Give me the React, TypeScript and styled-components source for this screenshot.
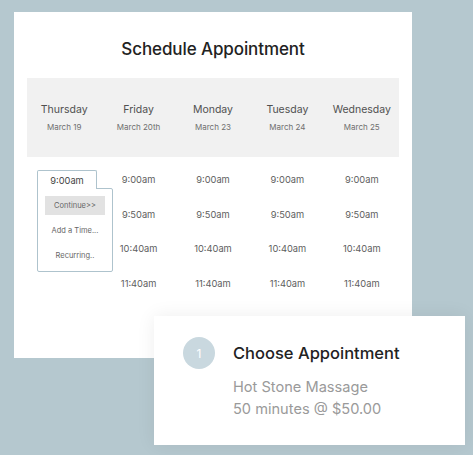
import styled, { createGlobalStyle } from "styled-components";

const GlobalStyle = createGlobalStyle`
  html, body {
    margin: 0;
    padding: 0;
    background: #b5c8cf;
    font-family: Inter, "Liberation Sans", sans-serif;
  }
`;

const days = [
  { name: "Thursday", date: "March 19" },
  { name: "Friday", date: "March 20th" },
  { name: "Monday", date: "March 23" },
  { name: "Tuesday", date: "March 24" },
  { name: "Wednesday", date: "March 25" },
];

const times = ["9:00am", "9:50am", "10:40am", "11:40am"];

const Page = styled.div`
  position: relative;
  width: 473px;
  height: 455px;
  padding: 12px 0 0 14px;
  box-sizing: border-box;
  overflow: hidden;
`;

const Card = styled.div`
  width: 398px;
  height: 346px;
  background: #fff;
  padding: 0 13px;
  box-sizing: border-box;
`;

const Title = styled.h1`
  margin: 0;
  padding-top: 27px;
  height: 66px;
  box-sizing: border-box;
  text-align: center;
  font-size: 17px;
  line-height: 20px;
  font-weight: 500;
  color: #222;
  letter-spacing: -0.1px;
`;

const Columns = styled.div`
  display: grid;
  grid-template-columns: repeat(5, minmax(0, 1fr));
`;

const Band = styled(Columns)`
  height: 79px;
  background: #f1f1f1;
  padding-top: 25px;
  box-sizing: border-box;
`;

const Day = styled.div`
  display: flex;
  flex-direction: column;
  align-items: center;
  gap: 4px;
`;

const DayName = styled.span`
  font-size: 10.5px;
  line-height: 14px;
  color: #505050;
`;

const DayDate = styled.span`
  font-size: 8px;
  line-height: 12px;
  color: #6f6f6f;
`;

const Slots = styled.div`
  display: flex;
  flex-direction: column;
  align-items: center;
  padding-top: 5px;
`;

const Slot = styled.div`
  height: 34.7px;
  display: flex;
  align-items: center;
  font-size: 9.3px;
  color: #5e5e5e;
`;

const PickedColumn = styled.div`
  padding: 13px 0 0 10px;
`;

const Popup = styled.div`
  width: 76px;
  display: flex;
  flex-direction: column;
`;

const Tab = styled.div`
  position: relative;
  z-index: 1;
  width: 60px;
  height: 19px;
  margin-bottom: -1px;
  background: #fff;
  border: 1px solid #aec3cd;
  border-bottom: none;
  border-radius: 2px 2px 0 0;
  box-sizing: border-box;
  display: flex;
  align-items: center;
  justify-content: center;
  font-size: 9.3px;
  color: #444;
`;

const Menu = styled.div`
  height: 84px;
  border: 1px solid #aec3cd;
  border-radius: 0 2px 2px 2px;
  box-sizing: border-box;
  display: flex;
  flex-direction: column;
  align-items: center;
  padding-top: 7px;
`;

const MenuItem = styled.div<{ $active?: boolean }>`
  width: 60px;
  height: ${(p) => (p.$active ? "19px" : "25px")};
  margin-bottom: ${(p) => (p.$active ? "3px" : "0")};
  background: ${(p) => (p.$active ? "#e2e2e2" : "transparent")};
  display: flex;
  align-items: center;
  justify-content: center;
  font-size: 7.5px;
  color: #666;
`;

const StepCard = styled.div`
  position: absolute;
  left: 154px;
  top: 316px;
  width: 311px;
  height: 129px;
  background: #fff;
  box-shadow: 0 0 18px rgba(0, 0, 0, 0.07);
  display: grid;
  grid-template-columns: 32px 1fr;
  column-gap: 18px;
  padding: 21px 0 0 29px;
  box-sizing: border-box;
`;

const StepBadge = styled.div`
  width: 32px;
  height: 32px;
  border-radius: 50%;
  background: #c9d8df;
  color: #fff;
  font-size: 12px;
  display: flex;
  align-items: center;
  justify-content: center;
`;

const StepText = styled.div`
  display: flex;
  flex-direction: column;
`;

const StepTitle = styled.div`
  height: 32px;
  margin-bottom: 7px;
  display: flex;
  align-items: center;
  font-size: 16.5px;
  font-weight: 500;
  color: #222;
`;

const StepDetail = styled.div`
  font-size: 14.6px;
  line-height: 22px;
  color: #9a9a9a;
`;

export default function App() {
  return (
    <Page>
      <GlobalStyle />
      <Card>
        <Title>Schedule Appointment</Title>
        <Band>
          {days.map((d) => (
            <Day key={d.name}>
              <DayName>{d.name}</DayName>
              <DayDate>{d.date}</DayDate>
            </Day>
          ))}
        </Band>
        <Columns>
          <PickedColumn>
            <Popup>
              <Tab>9:00am</Tab>
              <Menu>
                <MenuItem $active>Continue&gt;&gt;</MenuItem>
                <MenuItem>Add a Time...</MenuItem>
                <MenuItem>Recurring..</MenuItem>
              </Menu>
            </Popup>
          </PickedColumn>
          {days.slice(1).map((d) => (
            <Slots key={d.name}>
              {times.map((t) => (
                <Slot key={t}>{t}</Slot>
              ))}
            </Slots>
          ))}
        </Columns>
      </Card>
      <StepCard>
        <StepBadge>1</StepBadge>
        <StepText>
          <StepTitle>Choose Appointment</StepTitle>
          <StepDetail>Hot Stone Massage</StepDetail>
          <StepDetail>50 minutes @ $50.00</StepDetail>
        </StepText>
      </StepCard>
    </Page>
  );
}
